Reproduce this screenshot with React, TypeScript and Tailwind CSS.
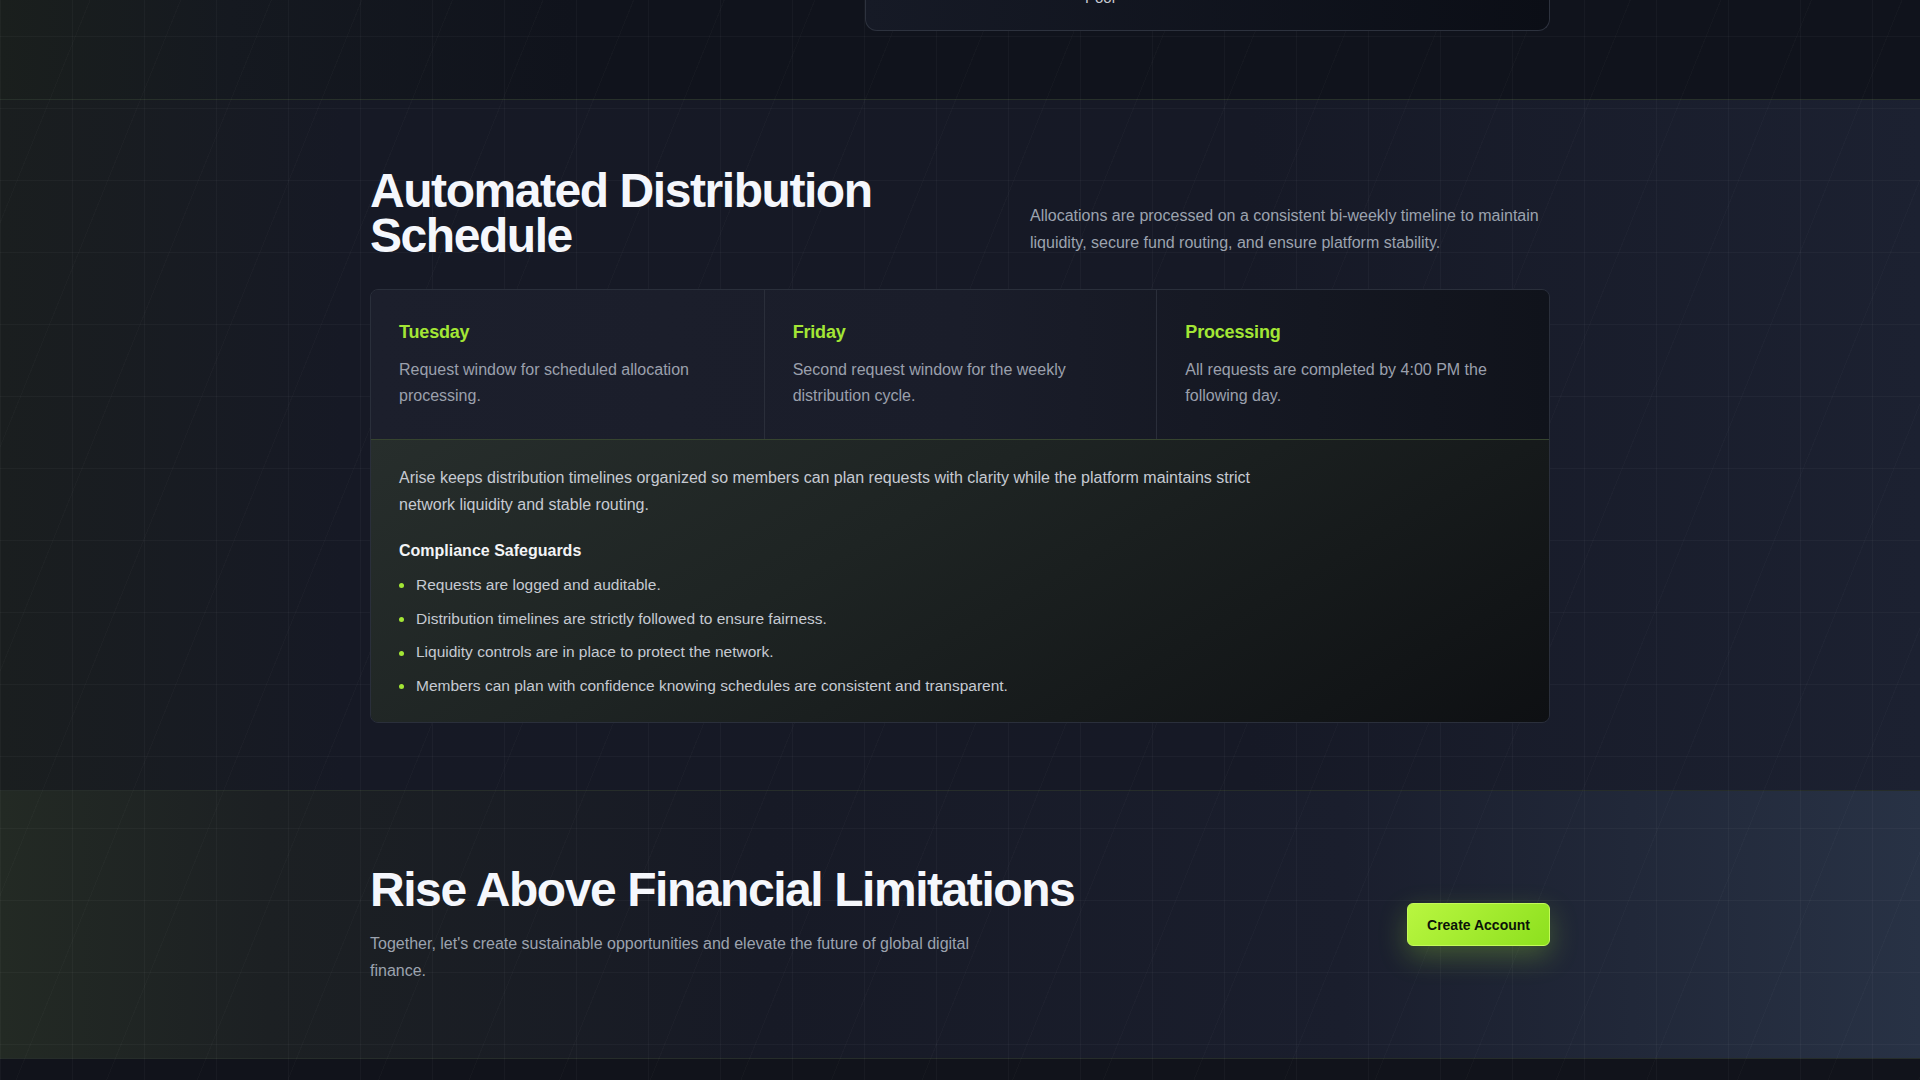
const schedule = [
  { day: "Tuesday", text: "Request window for scheduled allocation processing." },
  { day: "Friday", text: "Second request window for the weekly distribution cycle." },
  { day: "Processing", text: "All requests are completed by 4:00 PM the following day." },
];

const safeguards = [
  "Requests are logged and auditable.",
  "Distribution timelines are strictly followed to ensure fairness.",
  "Liquidity controls are in place to protect the network.",
  "Members can plan with confidence knowing schedules are consistent and transparent.",
];

function ScheduleCell({ day, text, first }: { day: string; text: string; first: boolean }) {
  return (
    <div className={first ? "px-7 pt-[28px] pb-[31px]" : "border-l border-[#2a2e3a] px-7 pt-[28px] pb-[31px]"}>
      <h3 className="mb-[11px] text-[18px] leading-7 font-bold tracking-[-0.01em] text-[#a3e635]">{day}</h3>
      <p className="text-[16px] leading-[1.6] text-[#9ba0ad]">{text}</p>
    </div>
  );
}

export default function App() {
  return (
    <div className="relative min-h-[1080px] overflow-hidden bg-[#11131b] font-['Liberation_Sans',Arial,sans-serif] text-white">
      {/* background grid + slanted lines */}
      <div className="pointer-events-none absolute inset-0 z-0 bg-[linear-gradient(to_right,rgba(255,255,255,0.03)_1px,transparent_1px),linear-gradient(to_bottom,rgba(255,255,255,0.03)_1px,transparent_1px)] bg-[length:72px_72px] bg-[position:0_36px]" />
      <div className="pointer-events-none absolute inset-0 z-0 bg-[repeating-linear-gradient(112deg,transparent_0px,transparent_83px,rgba(255,255,255,0.02)_83px,rgba(255,255,255,0.02)_84px)]" />

      {/* tail of previous section */}
      <section className="h-[100px] border-b border-[#27302a] bg-[linear-gradient(90deg,#1a1f1d_0%,#151920_12%,#10131c_30%,#10131c_100%)]">
        <div className="relative z-10 mx-auto flex w-[1180px] justify-end">
          <div className="h-[31px] w-[685px] overflow-hidden rounded-b-xl border-x border-b border-[#2d323e] bg-[linear-gradient(90deg,#161a26,#0b0e16)] pl-[219px]">
            <p className="-mt-[10px] text-[15px] leading-4 text-[#c7cad1]">Pool</p>
          </div>
        </div>
      </section>

      {/* distribution schedule */}
      <section className="bg-[linear-gradient(90deg,#1a1e1f_0%,#161925_18%,#161926_65%,#1c2131_100%)] pt-[68px] pb-[67px]">
        <div className="relative z-10 mx-auto w-[1180px]">
          <div className="mb-[31px] flex items-end justify-between">
            <h2 className="w-[560px] text-[48px] leading-[45px] font-bold tracking-[-0.03em] text-[#f5f7fc]">
              Automated Distribution Schedule
            </h2>
            <p className="mb-[2px] w-[520px] text-[16px] leading-[27px] text-[#9ca3af]">
              Allocations are processed on a consistent bi-weekly timeline to maintain liquidity, secure fund routing, and
              ensure platform stability.
            </p>
          </div>

          <div className="overflow-hidden rounded-lg border border-[#2a2f3b]">
            <div className="grid grid-cols-3 bg-[linear-gradient(90deg,#1c1f2c_0%,#1a1d2a_50%,#10131b_100%)]">
              {schedule.map((s, i) => (
                <ScheduleCell key={s.day} day={s.day} text={s.text} first={i === 0} />
              ))}
            </div>
            <div className="border-t border-[#36442f] bg-[linear-gradient(150deg,#272e2c_0%,#1e2423_40%,#0e1013_100%)] px-7 pt-6 pb-[24px]">
              <p className="max-w-[880px] text-[16px] leading-[27px] text-[#c6cad2]">
                Arise keeps distribution timelines organized so members can plan requests with clarity while the platform
                maintains strict network liquidity and stable routing.
              </p>
              <h4 className="mt-[21px] text-[16px] leading-6 font-bold text-[#f3f4f6]">Compliance Safeguards</h4>
              <ul className="mt-[9px] flex flex-col gap-2">
                {safeguards.map((item) => (
                  <li key={item} className="flex items-center gap-3 text-[15.5px] leading-[1.65] text-[#c6cad2]">
                    <span className="mt-[2px] h-[5px] w-[5px] shrink-0 rounded-full bg-[#a3e635]" />
                    {item}
                  </li>
                ))}
              </ul>
            </div>
          </div>
        </div>
      </section>

      {/* call to action */}
      <section className="flex h-[269px] items-center border-y border-[#262d2a] bg-[linear-gradient(90deg,#232a24_0%,#1c2023_14%,#171a26_40%,#1a1e2d_70%,#283245_100%)]">
        <div className="relative z-10 mx-auto flex w-[1180px] items-center justify-between">
          <div>
            <h2 className="text-[48px] leading-[48px] font-bold tracking-[-0.03em] text-[#f5f7fc]">
              Rise Above Financial Limitations
            </h2>
            <p className="mt-4 max-w-[640px] text-[16px] leading-[27px] text-[#9ca3af]">
              Together, let's create sustainable opportunities and elevate the future of global digital finance.
            </p>
          </div>
          <button className="h-[43px] w-[143px] rounded-md border border-[#c4fa5a] bg-[linear-gradient(135deg,#b9f640,#8de01e)] text-sm font-bold text-[#0c1309] shadow-[0_10px_28px_rgba(163,230,53,0.28)]">
            Create Account
          </button>
        </div>
      </section>
    </div>
  );
}
